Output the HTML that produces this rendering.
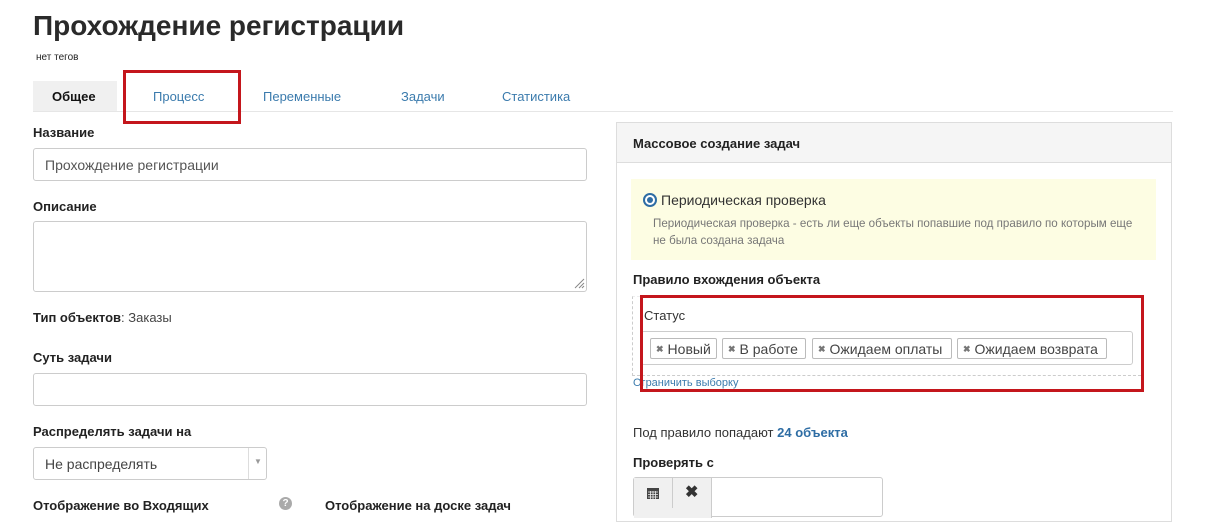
<!DOCTYPE html>
<html><head><meta charset="utf-8"><style>
*{box-sizing:border-box;margin:0;padding:0}
body{width:1226px;height:508px;overflow:hidden;background:#fff;font-family:"Liberation Sans",sans-serif;color:#333;position:relative}
.a{position:absolute;white-space:nowrap}
.lb{font-size:13px;font-weight:bold;color:#222}
.inp{position:absolute;border:1px solid #ccc;border-radius:3px;background:#fff}
.tab{position:absolute;top:89px;font-size:13px;color:#3b7bad}
.tag{position:absolute;top:338px;height:21px;border:1px solid #bbb;border-radius:2px;background:#fff;font-size:14px;color:#444;padding:2px 0 0 5px}
.tag b{font-size:9px;color:#777;margin-right:4px;vertical-align:2px}
</style></head><body>
<div class="a" style="left:33px;top:10px;font-size:28px;font-weight:bold;color:#2a2a2a">Прохождение регистрации</div>
<div class="a" style="left:36px;top:52px;font-size:10px;color:#222">нет тегов</div>

<div style="position:absolute;left:33px;top:81px;width:84px;height:30px;background:#f0f0f0"></div>
<div class="a" style="left:52px;top:89px;font-size:13px;font-weight:bold;color:#111">Общее</div>
<div class="tab" style="left:153px">Процесс</div>
<div class="tab" style="left:263px">Переменные</div>
<div class="tab" style="left:401px">Задачи</div>
<div class="tab" style="left:502px">Статистика</div>
<div style="position:absolute;left:33px;top:111px;width:1140px;height:1px;background:#e6e6e6"></div>
<div style="position:absolute;left:123px;top:70px;width:118px;height:54px;border:3px solid #c4161c"></div>

<div class="a lb" style="left:33px;top:125px">Название</div>
<div class="inp" style="left:33px;top:148px;width:554px;height:33px"></div>
<div class="a" style="left:45px;top:157px;font-size:14px;color:#555">Прохождение регистрации</div>
<div class="a lb" style="left:33px;top:199px">Описание</div>
<div class="inp" style="left:33px;top:221px;width:554px;height:71px"></div>
<svg class="a" style="left:573px;top:277px" width="12" height="12"><path d="M11 2L2 11M11 6L6 11M11 9L9 11" stroke="#888" stroke-width="1"/></svg>
<div class="a" style="left:33px;top:310px;font-size:13px;color:#444"><b style="color:#222">Тип объектов</b>: Заказы</div>
<div class="a lb" style="left:33px;top:350px">Суть задачи</div>
<div class="inp" style="left:33px;top:373px;width:554px;height:33px"></div>
<div class="a lb" style="left:33px;top:424px">Распределять задачи на</div>
<div class="inp" style="left:33px;top:447px;width:234px;height:33px"></div>
<div style="position:absolute;left:248px;top:448px;width:1px;height:31px;background:#ddd"></div>
<div class="a" style="left:254px;top:457px;font-size:8px;color:#999">▼</div>
<div class="a" style="left:45px;top:456px;font-size:14px;color:#444">Не распределять</div>
<div class="a lb" style="left:33px;top:498px">Отображение во Входящих</div>
<div style="position:absolute;left:279px;top:497px;width:13px;height:13px;border-radius:50%;background:#aaa;color:#fff;font-size:10px;font-weight:bold;text-align:center;line-height:13px">?</div>
<div class="a lb" style="left:325px;top:498px">Отображение на доске задач</div>

<div style="position:absolute;left:616px;top:122px;width:556px;height:400px;border:1px solid #ddd"></div>
<div style="position:absolute;left:617px;top:123px;width:554px;height:40px;background:#f5f5f5;border-bottom:1px solid #ddd"></div>
<div class="a lb" style="left:633px;top:136px">Массовое создание задач</div>
<div style="position:absolute;left:631px;top:179px;width:525px;height:81px;background:#fdfde3"></div>
<div style="position:absolute;left:643px;top:193px;width:14px;height:14px;border-radius:50%;border:2px solid #2e6da4;background:#fff"></div>
<div style="position:absolute;left:647px;top:197px;width:6px;height:6px;border-radius:50%;background:#2e6da4"></div>
<div class="a" style="left:661px;top:192px;font-size:14px;color:#333">Периодическая проверка</div>
<div class="a" style="left:653px;top:217px;font-size:11.6px;color:#777">Периодическая проверка - есть ли еще объекты попавшие под правило по которым еще</div>
<div class="a" style="left:653px;top:234px;font-size:11.6px;color:#777">не была создана задача</div>
<div class="a lb" style="left:633px;top:272px">Правило вхождения объекта</div>
<div style="position:absolute;left:632px;top:296px;width:509px;height:80px;border-left:1px dashed #ccc;border-bottom:1px dashed #ccc;border-top:1px dashed #eee"></div>
<div class="a" style="left:644px;top:308px;font-size:13px;color:#333">Статус</div>
<div class="inp" style="left:641px;top:331px;width:492px;height:34px"></div>
<div class="tag" style="left:650px;width:67px"><b>✖</b>Новый</div>
<div class="tag" style="left:722px;width:84px"><b>✖</b>В работе</div>
<div class="tag" style="left:812px;width:140px"><b>✖</b>Ожидаем оплаты</div>
<div class="tag" style="left:957px;width:150px"><b>✖</b>Ожидаем возврата</div>
<div class="a" style="left:633px;top:377px;font-size:11px;color:#3b7bad">Ограничить выборку</div>
<div style="position:absolute;left:640px;top:295px;width:504px;height:97px;border:3px solid #c4161c"></div>
<div class="a" style="left:633px;top:425px;font-size:13px;color:#333">Под правило попадают <b style="color:#2e6da4">24 объекта</b></div>
<div class="a lb" style="left:633px;top:455px">Проверять с</div>
<div class="inp" style="left:633px;top:477px;width:250px;height:40px"></div>
<div style="position:absolute;left:634px;top:478px;width:78px;height:40px;background:#f0f0f0;border-right:1px solid #ccc"></div>
<div style="position:absolute;left:672px;top:478px;width:1px;height:30px;background:#ccc"></div>
<svg class="a" style="left:646px;top:486px" width="14" height="14"><rect x="1" y="2" width="12" height="11" fill="#444"/><path d="M2 6h10M2 8.5h10M2 11h10M4.5 5v8M7 5v8M9.5 5v8" stroke="#f0f0f0" stroke-width="0.8"/></svg>
<div class="a" style="left:685px;top:482px;font-size:16px;font-weight:bold;color:#333">✖</div>
</body></html>
